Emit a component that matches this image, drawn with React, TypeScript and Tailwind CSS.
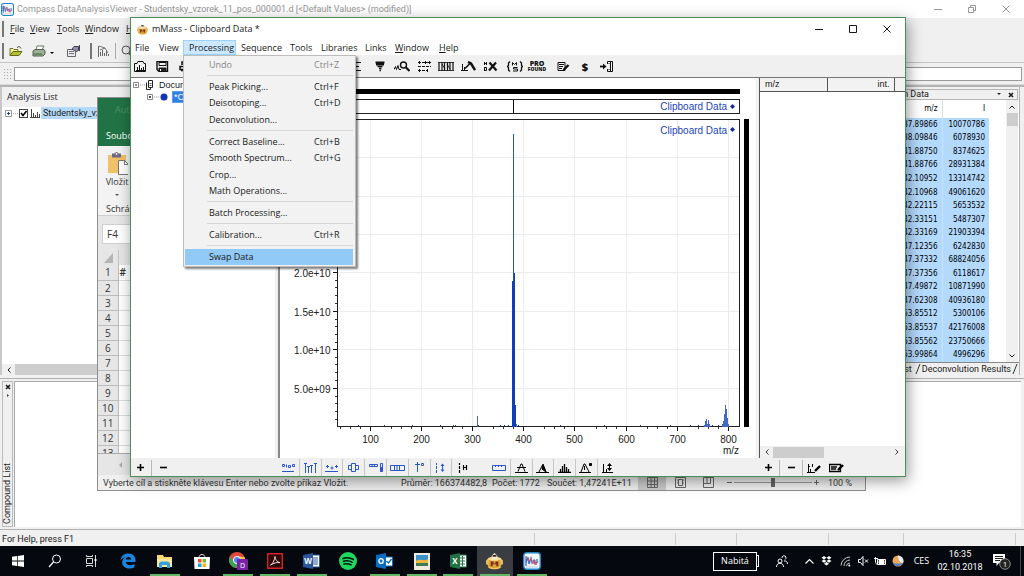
import type { ReactNode } from "react";

interface IconProps {
  w?: number;
  h?: number;
  children: ReactNode;
}

function Icon({ w = 14, h = 12, children }: IconProps) {
  return (
    <svg width={w} height={h} viewBox={`0 0 ${w} ${h}`} fill="none" stroke="currentColor" className="shrink-0" aria-hidden="true">
      {children}
    </svg>
  );
}

function Tool({ label, children, className = "" }: { label: string; children?: ReactNode; className?: string }) {
  return (
    <button type="button" aria-label={label} className={`flex h-full w-[22px] shrink-0 items-center justify-center ${className}`}>
      {children}
    </button>
  );
}

function Sep() {
  return <span className="h-4 w-px shrink-0 bg-[#b8b8b8]" />;
}

/* ---------- logos ---------- */

function CompassLogo({ size }: { size: number }) {
  return (
    <svg width={size} height={size} viewBox="0 0 18 18" fill="none" aria-hidden="true">
      <rect x=".7" y=".7" width="16.6" height="16.6" rx="3" fill="#f3f6fb" stroke="#1f86c9" strokeWidth="1.4" />
      <path d="M3 14V4v7l2-6 1 7 2-6 1 5 2-3 1 4 2-2v-3" stroke="#3a62b8" strokeWidth="1.2" />
      <path d="M4 5l2 4 2-3 2 6 2-4 1 5 2-4" stroke="#d8607c" strokeWidth="1" />
      <path d="M3 15h12" stroke="#b9cbe6" />
    </svg>
  );
}

function MassLogo({ size }: { size: number }) {
  return (
    <svg width={size} height={size} viewBox="0 0 18 18" fill="none" className="shrink-0" aria-hidden="true">
      <path d="M2 6c2-3 12-3 14 0v9c-2 3-12 3-14 0z" fill="#dba23a" />
      <path d="M0 8l3-3v8l-3-1zM18 8l-3-3v8l3-1z" fill="#e8bd62" />
      <path d="M2 6c2-2 12-2 14 0-1 3-13 3-14 0z" fill="#f8dc92" />
      <path d="M6 7V3l3-3 3 3v4z" fill="#efe9dc" />
      <path d="M7 2h4v2H7z" fill="#4a2c14" />
      <path d="M5 9h3v2h2V9h3v5h-2v-2H7v2H5z" fill="#7a2f14" />
      <path d="M3 15c2 2 10 2 12 0" stroke="#f7d36c" />
    </svg>
  );
}

/* ---------- viewer behind ---------- */

const viewerMenus = [
  { name: "File", cls: "w-5" },
  { name: "View", cls: "w-[27px]" },
  { name: "Tools", cls: "w-7" },
  { name: "Window", cls: "w-[41px]" },
  { name: "Help", cls: "w-7" },
];

function ViewerHeader() {
  return (
    <header>
      <div className="flex h-[18px] items-center bg-white pl-px text-[#979797]">
        <CompassLogo size={13} />
        <h1 className="ml-[3px] whitespace-nowrap font-['Roboto',sans-serif] font-normal">
          Compass DataAnalysisViewer - Studentsky_vzorek_11_pos_000001.d [&lt;Default Values&gt; (modified)]
        </h1>
        <div className="ml-auto flex items-center gap-[26px] pr-[14px]">
          <button type="button" aria-label="Minimize"><Icon w={8} h={8}><path d="M0 4.5h8" /></Icon></button>
          <button type="button" aria-label="Restore"><Icon w={8} h={8}><path d="M.5 2.5h5v5h-5zM2.5 2V.5h5v5H6" /></Icon></button>
          <button type="button" aria-label="Close"><Icon w={8} h={8}><path d="M.5.5l7 7M7.500.5l-7 7" /></Icon></button>
        </div>
      </div>
      <nav className="flex h-[22px] items-center pl-[2px]">
        <span className="mr-[6px] h-4 w-[2px] bg-[#777]" />
        {viewerMenus.map((m) => (
          <button key={m.name} type="button" className={`shrink-0 text-left ${m.cls}`}>
            <span className="underline">{m.name[0]}</span>
            {m.name.slice(1)}
          </button>
        ))}
      </nav>
      <div className="flex h-[22px] items-center pl-[2px]">
        <span className="mr-[5px] h-4 w-[2px] bg-[#777]" />
        <button type="button" aria-label="Open">
          <Icon w={14} h={12}>
            <path d="M1 10.500V3.500h3l1 1h4v2" stroke="#6f7a1c" fill="#f5ef9e" />
            <path d="M1 10.500l3-4h9l-3 4z" stroke="#5f6a14" fill="#b5bf35" />
            <path d="M8 2.500c2-1.500 3-1 4 1" stroke="#444" />
          </Icon>
        </button>
        <button type="button" aria-label="Print" className="ml-[9px] flex items-center">
          <Icon w={14} h={13}>
            <path d="M4 5l1-4h7l-2 4z" fill="#fff" stroke="#6c7a6a" />
            <path d="M1 6l2-1.500h9l1 1.500v3l-2 2H1z" fill="#9fae96" stroke="#4f5f50" />
            <path d="M2 9h8" stroke="#2d6b2d" />
          </Icon>
          <span className="ml-1 mt-1 border-x-2 border-t-2 border-x-transparent border-t-black" />
        </button>
        <button type="button" aria-label="Properties" className="ml-[13px]">
          <Icon w={13} h={13}>
            <path d="M.5 4.500h8v7h-8z" fill="#e8e8ee" stroke="#666" />
            <path d="M2 6.500h5M2 8.500h5" stroke="#777" />
            <path d="M5 4l2-2.500h4.500v4l-2 1-2-1z" fill="#8d8db8" stroke="#444" />
            <path d="M12.500 0v6" stroke="#445" />
          </Icon>
        </button>
        <span className="ml-[10px] mr-[5px] h-4 w-[2px] bg-[#777]" />
        <button type="button" aria-label="Spectrum">
          <Icon w={13} h={13}>
            <path d="M1.500 1v11M3.500 11V7M5.500 11V5M7.500 11V8M9.500 11V6M11.500 11V9" stroke="#666" />
            <path d="M2 1l6 2-5 2M8 3l3 5" stroke="#777" />
          </Icon>
        </button>
        <span className="mx-[5px] h-4 w-px bg-[#aaa]" />
        <button type="button" aria-label="Zoom">
          <Icon w={13} h={13}>
            <circle cx="5" cy="5" r="4" stroke="#555" />
            <path d="M8 8l4 4" stroke="#555" strokeWidth="2" />
          </Icon>
        </button>
      </div>
      <div className="flex h-[23px] items-center border-y border-t-[#c4c4c4] border-b-[#d9d9d9] pl-[3px] pr-[2px]">
        <span className="mr-[2px] h-3 w-[9px] bg-[radial-gradient(#aaa_1px,transparent_1px)] bg-[size:3px_3px]" />
        <input aria-label="Message" className="h-[14px] min-w-0 flex-1 border border-[#9a9a9a] bg-white px-1 outline-none" />
      </div>
    </header>
  );
}

const peaks: [string, string][] = [
  ["137.89866", "10070786"],
  ["138.09846", "6078930"],
  ["141.88750", "8374625"],
  ["141.88766", "28931384"],
  ["142.10952", "13314742"],
  ["142.10968", "49061620"],
  ["142.22115", "5653532"],
  ["142.33151", "5487307"],
  ["142.33169", "21903394"],
  ["147.12356", "6242830"],
  ["147.37332", "68824056"],
  ["147.37356", "6118617"],
  ["147.49872", "10871990"],
  ["147.62308", "40936180"],
  ["153.85512", "5300106"],
  ["153.85537", "42176008"],
  ["153.85562", "23750666"],
  ["153.99864", "4996296"],
];

function ViewerMain() {
  return (
    <main className="flex min-h-0 flex-1 border-t-2 border-t-[#b4b4b4] pb-[3px]">
      <section className="flex w-64 flex-col border-l-2 border-l-[#c8c8c8]">
        <h2 className="flex h-5 items-center pl-[5px] font-normal">Analysis List</h2>
        <div className="flex-1 bg-white pl-[3px]">
          <div className="flex h-3 items-center">
            <Icon w={14} h={9}>
              <path d="M.5 1.500h6v6h-6z" stroke="#999" />
              <path d="M2 4.500h3M3.500 3v3" stroke="#223a80" />
              <path d="M8 4.500h5" stroke="#aaa" strokeDasharray="1 1" />
            </Icon>
            <input id="analysis" type="checkbox" defaultChecked className="h-[9px] w-[9px] appearance-none border border-[#444] bg-white" />
            <svg width="9" height="9" viewBox="0 0 9 9" fill="none" className="pointer-events-none -ml-[9px]" aria-hidden="true">
              <path d="M2 4l2 2.500L7.500 2" stroke="#000" strokeWidth="1.600" />
            </svg>
            <Icon w={13} h={10}>
              <path d="M3.500 1v8M5.500 5v4M7.500 7v2M2 9.500h10M9.500 4v5M11.500 6v3" stroke="#444" />
            </Icon>
            <label htmlFor="analysis" className="h-3 whitespace-nowrap bg-[#b5d9fb] px-[2px] font-['Roboto',sans-serif] leading-3">Studentsky_vzorek</label>
          </div>
        </div>
        <div className="flex h-[11px] items-center">
          <button type="button" aria-label="Scroll left" className="flex h-full w-[13px] items-center justify-center">
            <Icon w={4} h={6}><path d="M3.500.5L1 3l2.500 2.500" /></Icon>
          </button>
          <span className="h-full flex-1 bg-[#cdcdcd]" />
        </div>
      </section>
      <div className="min-w-0 flex-1 bg-white" />
      <section className="mr-1 flex w-[140px] flex-col border-r border-r-[#b4b4b4]">
        <div className="mr-px mt-[2px] flex h-[11px] items-center border-y border-r border-[#b4b4b4]">
          <h2 className="flex w-[49px] justify-end whitespace-nowrap font-['Roboto',sans-serif] font-normal leading-none">Spectrum Data</h2>
          <button type="button" aria-label="Panel menu" className="ml-auto">
            <Icon w={4} h={3}><path d="M0 0h4L2 2z" fill="#222" stroke="none" /></Icon>
          </button>
          <button type="button" aria-label="Close panel" className="ml-[7px] mr-[3px]">
            <Icon w={6} h={6}><path d="M1 1l4 4M5 1L1 5" strokeWidth="1.600" /></Icon>
          </button>
        </div>
        <div className="flex min-h-0 flex-1 bg-white">
          <table className="h-full w-[109px] text-right font-['DejaVu_Sans_Condensed','DejaVu_Sans',sans-serif] text-[8px] leading-none text-black">
            <thead>
              <tr className="h-[18px]">
                <th className="w-[62px] border-r border-r-[#ddd] pr-1 font-normal">m/z</th>
                <th className="pr-1 font-normal">I</th>
              </tr>
            </thead>
            <tbody className="bg-[#b3d9fd]">
              {peaks.map(([mz, intensity]) => (
                <tr key={mz}>
                  <td className="border-r border-r-[#c6e2fd] pr-1">{mz}</td>
                  <td className="pr-1">{intensity}</td>
                </tr>
              ))}
            </tbody>
          </table>
          <div className="ml-auto mr-px flex w-3 flex-col items-center bg-[#f0f0f0]">
            <button type="button" aria-label="Scroll up" className="flex h-[13px] items-center">
              <Icon w={6} h={4}><path d="M.5 3.500L3 1l2.500 2.500" /></Icon>
            </button>
            <span className="h-[13px] w-[11px] bg-[#cdcdcd]" />
            <button type="button" aria-label="Scroll down" className="mt-auto flex h-3 items-center">
              <Icon w={6} h={4}><path d="M.5.5L3 3 5.500.5" /></Icon>
            </button>
          </div>
        </div>
        <div className="flex h-[13px] items-center border-t border-t-[#888] font-['Roboto',sans-serif]">
          <span className="w-[33px] text-right">List</span>
          <Icon w={10} h={12}><path d="M4 11L8 1" stroke="#333" /></Icon>
          <button type="button" className="whitespace-nowrap">Deconvolution Results</button>
          <Icon w={8} h={12}><path d="M2 11L6 1" stroke="#333" /></Icon>
        </div>
      </section>
    </main>
  );
}

function ViewerFooter() {
  return (
    <footer>
      <section className="flex h-[152px] border-y border-y-[#b0b0b0] py-[2px] pl-[2px] pr-[3px]">
        <div className="mr-px flex w-[11px] flex-col items-center border border-[#bbb] pt-[2px]">
          <button type="button" aria-label="Close list"><Icon w={6} h={6}><path d="M1 1l4 4M5 1L1 5" strokeWidth="1.600" /></Icon></button>
          <Icon w={4} h={8}><path d="M1 4l2 1.500L1 7z" fill="#444" stroke="none" /></Icon>
          <h2 className="mb-[2px] mt-auto rotate-180 font-['Roboto',sans-serif] font-normal leading-[9px] [writing-mode:vertical-rl]">Compound List</h2>
        </div>
        <div className="flex-1 border-l border-t border-[#aaa] bg-white" />
      </section>
      <div className="flex h-4 items-center pl-[2px] pt-[2px]">
        <span className="font-['Roboto',sans-serif]">For Help, press F1</span>
        <div className="ml-auto flex h-3">
          <span className="w-[141px] border-l border-[#ccc]" />
          <span className="w-[61px] border-l border-[#ccc]" />
          <span className="w-[92px] border-l border-[#ccc]" />
          <span className="w-[75px] border-l border-[#ccc]" />
          <span className="w-[112px] border-l border-[#ccc]" />
          <span className="w-[9px] border-l border-[#ccc]" />
        </div>
      </div>
    </footer>
  );
}

/* ---------- spreadsheet ---------- */

const rows = [1, 2, 3, 4, 5, 6, 7, 8, 9, 10, 11, 12, 13];

function Sheet() {
  return (
    <section className="absolute bottom-[85px] left-[97px] right-[158px] top-[97px] flex flex-col border border-[#8e8e8e] bg-[#e6e6e6] text-[#333]">
      <header className="flex h-12 shrink-0 flex-col justify-between bg-[#217346] pb-[4px] pl-2 pt-[6px]">
        <span className="pl-[9px] text-[#4f9068]">Aut</span>
        <button type="button" className="self-start text-white">Soubor</button>
      </header>
      <div className="flex h-[70px] shrink-0 flex-col border-b border-b-[#cfcfcf] bg-[#f3f3f3] pl-2 pt-[6px] leading-3">
        <button type="button" className="flex w-[22px] flex-col items-center">
          <Icon w={22} h={24}>
            <path d="M2 3h18v18H2z" fill="#efc26a" stroke="none" />
            <path d="M6 1.500h9v4H6z" fill="#6a6a86" stroke="none" />
            <circle cx="10.500" cy="2" r="1.500" fill="#fff" stroke="#5b5b78" />
            <path d="M12.500 8.500h6l4 4v10h-10z" fill="#fff" stroke="#777" />
            <path d="M18.500 8.500v4h4" stroke="#777" />
          </Icon>
          <span>Vložit</span>
          <span className="mt-[6px] border-x-2 border-t-2 border-x-transparent border-t-[#555]" />
        </button>
        <span className="mt-auto">Schránka</span>
      </div>
      <div className="flex h-[34px] shrink-0 items-center pl-1 pt-[2px]">
        <input aria-label="Name box" defaultValue="F4" className="h-5 w-20 border border-[#d0d0d0] bg-white px-1 text-[10px] outline-none" />
      </div>
      <div className="min-h-0 flex-1 overflow-hidden border-b border-b-[#aaa]">
        <table className="border-collapse text-center text-[10px] leading-[14px]">
          <thead>
            <tr className="h-[15px]">
              <th className="w-5 border-r border-r-[#c6c6c6]">
                <Icon w={16} h={10}><path d="M15 0v10H6z" fill="#b5b5b5" stroke="none" /></Icon>
              </th>
              <th className="w-16" />
            </tr>
          </thead>
          <tbody>
            {rows.map((n) => (
              <tr key={n} className="h-[15px]">
                <th className="border-b border-r border-[#bdbdbd] font-normal">{n}</th>
                <td className="border-b border-b-[#ddd] bg-white pl-px text-left font-semibold">{n === 1 ? "#" : ""}</td>
              </tr>
            ))}
          </tbody>
        </table>
      </div>
      <div className="flex h-[21px] shrink-0 items-center pl-5 text-[#aaa]">
        <Icon w={4} h={6}><path d="M4 0v6L1 3z" fill="currentColor" stroke="none" /></Icon>
      </div>
      <footer className="flex h-[15px] shrink-0 items-center whitespace-nowrap bg-[#f0f0f0] pl-[5px] pr-[13px] font-['Roboto',sans-serif]">
        <span className="w-[298px]">Vyberte cíl a stiskněte klávesu Enter nebo zvolte příkaz Vložit.</span>
        <span className="w-[91px]">Průměr: 166374482,8</span>
        <span className="w-[55px]">Počet: 1772</span>
        <span>Součet: 1,47241E+11</span>
        <div className="ml-auto flex items-center text-[#666]">
          <button type="button" aria-label="Normal view" className="flex h-[15px] w-7 items-center justify-center bg-[#cbcbcb]">
            <Icon w={11} h={11}><path d="M.5.5h10v10H.5zM.5 4h10M.5 7.500h10M4 .5v10M7.500.5v10" /></Icon>
          </button>
          <button type="button" aria-label="Page layout" className="flex w-7 justify-center">
            <Icon w={11} h={11}><path d="M.5.5h10v10H.5zM3.500 2.500h4v6h-4zM2 3h1M2 6h1M8 3h1M8 6h1" /></Icon>
          </button>
          <button type="button" aria-label="Page breaks" className="flex w-7 justify-center">
            <Icon w={11} h={11}><path d="M.5.5h10v10H.5zM.5 6.500h7V.5M4 .5v6" /></Icon>
          </button>
          <button type="button" aria-label="Zoom out" className="ml-[5px]"><Icon w={5} h={5}><path d="M0 2.500h5" /></Icon></button>
          <input
            type="range"
            aria-label="Zoom"
            className="mx-[2px] h-[9px] w-[78px] appearance-none bg-[linear-gradient(#999,#999)] bg-[length:100%_1px] bg-center bg-no-repeat [&::-webkit-slider-thumb]:h-[9px] [&::-webkit-slider-thumb]:w-1 [&::-webkit-slider-thumb]:appearance-none [&::-webkit-slider-thumb]:bg-[#666]"
          />
          <button type="button" aria-label="Zoom in"><Icon w={5} h={5}><path d="M0 2.500h5M2.500 0v5" /></Icon></button>
          <span className="ml-[9px] text-[#444]">100 %</span>
        </div>
      </footer>
    </section>
  );
}

/* ---------- mMass ---------- */

const menuItems: ([string, string] | null)[] = [
  ["Undo", "Ctrl+Z"],
  null,
  ["Peak Picking...", "Ctrl+F"],
  ["Deisotoping...", "Ctrl+D"],
  ["Deconvolution...", ""],
  null,
  ["Correct Baseline...", "Ctrl+B"],
  ["Smooth Spectrum...", "Ctrl+G"],
  ["Crop...", ""],
  ["Math Operations...", ""],
  null,
  ["Batch Processing...", ""],
  null,
  ["Calibration...", "Ctrl+R"],
  null,
  ["Swap Data", ""],
];

function ProcessingMenu() {
  return (
    <div role="menu" className="absolute left-0 top-full z-10 flex h-[212px] w-[173px] flex-col border border-[#bdbdbd] bg-[#f2f2f2] pb-px pl-px pr-[2px] shadow-[2px_2px_2px_rgba(0,0,0,0.5)]">
      {menuItems.map((item, i) =>
        item ? (
          <button
            key={i}
            type="button"
            role="menuitem"
            disabled={item[0] === "Undo"}
            className={`flex min-h-0 flex-[3] items-center pl-6 leading-none disabled:text-[#858585] ${item[0] === "Swap Data" ? "bg-[#91c9f7]" : ""}`}
          >
            <span className="w-[105px] whitespace-nowrap text-left">{item[0]}</span>
            <span className="whitespace-nowrap">{item[1]}</span>
          </button>
        ) : (
          <div key={i} className="ml-[22px] flex flex-1 items-center">
            <span className="h-px w-full bg-[#d7d7d7]" />
          </div>
        )
      )}
    </div>
  );
}

const massMenus = [
  { name: "File", cls: "w-6" },
  { name: "View", cls: "w-[25px]" },
  { name: "Processing", cls: "w-[53px]" },
  { name: "Sequence", cls: "w-[49px]" },
  { name: "Tools", cls: "w-[31px]" },
  { name: "Libraries", cls: "w-11" },
  { name: "Links", cls: "w-[30px]" },
  { name: "Window", cls: "w-11" },
  { name: "Help", cls: "w-8" },
];

function MassHeader() {
  return (
    <header className="shrink-0 bg-white">
      <div className="flex h-[22px] items-center pl-[6px]">
        <MassLogo size={11} />
        <h2 className="ml-[4px] font-normal">mMass - Clipboard Data *</h2>
        <div className="ml-auto flex items-center gap-[26px] pr-[14px]">
          <button type="button" aria-label="Minimize"><Icon w={8} h={8}><path d="M0 4.500h8" /></Icon></button>
          <button type="button" aria-label="Maximize"><Icon w={8} h={8}><path d="M.5.5h7v7h-7z" /></Icon></button>
          <button type="button" aria-label="Close"><Icon w={8} h={8}><path d="M.5.5l7 7M7.500.5l-7 7" /></Icon></button>
        </div>
      </div>
      <nav className="flex h-[15px] pl-[4px]">
        {massMenus.map((m) =>
          m.name === "Processing" ? (
            <div key={m.name} className="relative -ml-px mr-[5px]">
              <button type="button" aria-expanded="true" className="h-full w-[53px] border border-[#99d1ff] bg-[#cce8ff] pl-[5px] text-left leading-none">
                {m.name}
              </button>
              <ProcessingMenu />
            </div>
          ) : (
            <button key={m.name} type="button" className={`text-left leading-none ${m.cls}`}>
              {m.name === "Window" || m.name === "Help" ? (
                <>
                  <span className="underline">{m.name[0]}</span>
                  {m.name.slice(1)}
                </>
              ) : (
                m.name
              )}
            </button>
          )
        )}
      </nav>
      <div className="flex h-[22px] items-center bg-[#f0f0f0] text-[#111]">
        <div className="-ml-[2px] mr-[149px] flex h-full">
          <Tool label="Open document">
            <Icon w={13} h={11}><path d="M1 2.500h2l1-2h5l1 2h1.500v8H.5v-8z" /><path d="M3.500 9V6M5.500 9V4M7.500 9V7M9.500 9V6M2 9.500h9" /></Icon>
          </Tool>
          <Tool label="Save document">
            <Icon w={13} h={11}><path d="M1 .5h10.500v10H3l-2-2z" strokeWidth="1.400" /><path d="M3 1.500h7v3H3z" /><path d="M3 7h7v3.500H3z" fill="#222" /><path d="M4.500 8v2" stroke="#fff" /></Icon>
          </Tool>
          <Tool label="Print">
            <Icon w={13} h={11}><path d="M4 4V1h6v3M2 5.500h10v3H2zM3 9.500h8" strokeWidth="1.500" /></Icon>
          </Tool>
        </div>
        <Tool label="Compare">
          <Icon w={13} h={11}><path d="M0 1.500h12M0 5.500h10M0 9.500h12" /></Icon>
        </Tool>
        <span className="ml-[3px]"><Sep /></span>
        <Tool label="Filter">
          <Icon w={12} h={11}><path d="M1.500 1.500h9M2 3.500h8" strokeWidth="2" /><path d="M3.500 5.500h5M5 7.500h2.500M5.500 9.500H7" strokeWidth="1.700" /></Icon>
        </Tool>
        <Tool label="Peak zoom">
          <Icon w={16} h={11}><path d="M0 8.500l1.500-3 1 3 1.500-4 1 4h2" /><circle cx="9.500" cy="4" r="3" strokeWidth="1.400" /><path d="M11.500 6l4 4" strokeWidth="2.200" /></Icon>
        </Tool>
        <Tool label="Mass lists">
          <Icon w={15} h={11}><path d="M1 1.500h13M1 5.500h13M1 9.500h10" strokeDasharray="3 1" /><path d="M2.500 0v3M8.500 0v3M12.500 0v3M2.500 8v3M10.500 8v3" /></Icon>
        </Tool>
        <Tool label="Sequence">
          <Icon w={16} h={11}><path d="M1 1v9M4 1v9M6.500 1v9M9.500 1v9M12 1v9M15 1v9" strokeWidth="1.200" /><path d="M0 1.500h16M0 9.500h16M4 3l3 5M9 3l3 5" strokeWidth=".8" /></Icon>
        </Tool>
        <Tool label="Baseline">
          <Icon w={15} h={11}><path d="M0 9.500h7M1.500 3v6M3.500 6v3" /><path d="M4 7.500L9 2.500" strokeWidth="1.600" /><path d="M7 1l3 1.500L14 9" strokeWidth="2.400" /></Icon>
        </Tool>
        <Tool label="Exchange">
          <Icon w={15} h={11}><path d="M1.500 1v3M3.500 1v3M1 2.500h3M1.500 6v4M1.500 6.500h2v3h-2" /><path d="M6.500 1.500l7 8M13 1.500l-7 8" strokeWidth="2.200" /></Icon>
        </Tool>
        <span className="ml-[1px] mr-[2px]"><Sep /></span>
        <Tool label="Mascot">
          <Icon w={16} h={11}><path d="M3 .5L1.500 2v2.500L.5 5.500l1 1V9L3 10.500M13 .5L14.500 2v2.500l1 1-1 1V9L13 10.500" strokeWidth="1.300" /><path d="M5.500 4.500v-3l2 2 2-2v3" /><path d="M10.500 6.500H6.500v1.500h4v2H6" /></Icon>
        </Tool>
        <Tool label="ProFound">
          <span className="flex flex-col items-center text-[7px] font-extrabold leading-[6px]">
            <span>PRO</span>
            <span className="text-[5px] leading-[5px]">FOUND</span>
          </span>
        </Tool>
        <span className="mx-[2px]"><Sep /></span>
        <Tool label="Report">
          <Icon w={13} h={11}><path d="M1 1.500h7v8H1zM2 3.500h5M2 5.500h4M2 7.500h3" /><path d="M6.500 9l5-5" strokeWidth="2.400" /></Icon>
        </Tool>
        <Tool label="Donate">
          <span className="text-[11px] font-extrabold leading-none">$</span>
        </Tool>
        <Tool label="Quit">
          <Icon w={14} h={11}><path d="M0 5.500h4" strokeWidth="1.800" /><path d="M3 2.500L6.500 5.500 3 8.500z" fill="#111" stroke="none" /><path d="M7.500 3V.5h5v10h-5V8M10.500 1v9M8.500 2.500h1M8.500 8.500h1" /></Icon>
        </Tool>
      </div>
    </header>
  );
}

function DocumentTree() {
  return (
    <div className="w-[144px] shrink-0 bg-white pt-px font-['Liberation_Sans',sans-serif]">
      <div className="flex h-3 items-center">
        <Icon w={28} h={12}>
          <path d="M2.500 3.500h5v5h-5z" stroke="#888" />
          <path d="M4 6h2" stroke="#111" />
          <path d="M9 6h6" stroke="#999" strokeDasharray="1 1" />
          <path d="M17.500 1.500h4v7h-4zM15.500 3.500v7h4v-2" stroke="#222" />
          <path d="M18.500 4.500h2M18.500 6.500h2" stroke="#555" />
        </Icon>
        <span>Documents</span>
      </div>
      <div className="flex h-3 items-center">
        <Icon w={41} h={12}>
          <path d="M16.500 3.500h5v5h-5z" stroke="#888" />
          <path d="M18 6h2M19 5v2" stroke="#111" />
          <path d="M23 6h5" stroke="#999" strokeDasharray="1 1" />
          <circle cx="33" cy="6" r="3.500" fill="#1432b4" stroke="none" />
        </Icon>
        <span className="flex h-3 w-24 items-center border border-[#5f9fe8] bg-[#2f7fe6] pl-px leading-[10px] text-white">*Clipboard Data</span>
      </div>
    </div>
  );
}

const xTicks = [100, 200, 300, 400, 500, 600, 700, 800];
const yTicks = ["5.0e+09", "1.0e+10", "1.5e+10", "2.0e+10"];
const GRID_ROWS = 7;
const X0 = 370;
const PER_100 = 51.1;
const BASE = 427;
const PER_Y = 38.4;

const gridY = (i: number) => Math.round(BASE - (i + 1) * PER_Y) - 0.5;

// x position, top of the peak
const clusterPeaks = [
  [477, 416], [516, 424], [704, 425], [705, 421], [706, 419], [707, 424], [708, 420], [709, 424],
  [722, 424], [723, 421], [724, 414], [725, 405], [726, 409], [727, 418], [728, 424],
];
const noise = [358, 384, 412, 440, 453, 455, 478, 500, 504, 508, 518, 560, 604, 640, 670, 690, 698, 712, 718];

function Spectrum() {
  return (
    <svg viewBox="280 78 476 380" className="h-full w-full" fontFamily="'Liberation Sans', sans-serif" fontSize="10" shapeRendering="crispEdges" role="img" aria-label="Mass spectrum">
      <rect x="338" y="89" width="402" height="5" fill="#000" />
      <rect x="337.500" y="99.500" width="402" height="14" fill="#fff" stroke="#222" />
      <path d="M513.500 100v14" stroke="#111" strokeWidth="1" />
      <rect x="744" y="119" width="5" height="308" fill="#000" />
      {xTicks.map((t, i) => (
        <path key={t} d={`M${Math.round(X0 + i * PER_100) + 0.5} 120v307`} stroke="#ececec" />
      ))}
      {Array.from({ length: GRID_ROWS }, (_, i) => (
        <path key={i} d={`M338 ${gridY(i)}h401`} stroke="#ececec" />
      ))}
      <rect x="337.500" y="119.500" width="402" height="307" fill="none" stroke="#222" />
      {xTicks.map((t, i) => {
        const x = Math.round(X0 + i * PER_100) + 0.5;
        return (
          <g key={t}>
            <path d={`M${x} 427v4`} stroke="#111" />
            <path d={`M${x - 30.5} 427v2M${x - 20.5} 427v2M${x - 10.5} 427v2`} stroke="#333" />
            <text x={x} y="443" textAnchor="middle" fill="#222">{t}</text>
          </g>
        );
      })}
      {yTicks.map((t, i) => {
        const y = gridY(i);
        return (
          <g key={t}>
            <path d={`M333 ${y}h4`} stroke="#111" />
            <path d={`M335 ${y + 8}h2M335 ${y + 15}h2M335 ${y + 23}h2M335 ${y + 31}h2`} stroke="#333" />
            <text x="330.500" y={y + 4} textAnchor="end" fill="#222">{t}</text>
          </g>
        );
      })}
      <text x="739" y="454" textAnchor="end" fill="#222">m/z</text>

      {noise.map((x) => (
        <path key={x} d={`M${x} 426v-1`} stroke="#1b3aa0" />
      ))}
      {clusterPeaks.map(([x, y]) => (
        <path key={x} d={`M${x + 0.5} ${y}V427`} stroke="#3f68c8" />
      ))}
      <path d="M513.500 134V427" stroke="#2558c4" />
      <path d="M513 281V427M514.500 405V427" stroke="#123fb8" strokeWidth="2" />
      <path d="M514 273V427" stroke="#123fb8" />

      <g fill="#2344b8">
        <text x="727" y="110" textAnchor="end">Clipboard Data</text>
        <text x="727" y="134" textAnchor="end">Clipboard Data</text>
        <path d="M732.500 104l2.500 2.500-2.500 2.500-2.500-2.500zM732.500 127l2.500 2.500-2.500 2.500-2.500-2.500z" fill="#1a2c9c" shapeRendering="auto" />
      </g>
    </svg>
  );
}

function PeakList() {
  return (
    <div className="ml-[3px] flex w-[146px] shrink-0 flex-col border-l border-l-[#555] bg-white font-['Liberation_Sans',sans-serif]">
      <table className="w-full table-fixed bg-[#f2f2f2]">
        <thead>
          <tr className="h-[13px] border-b border-b-[#555] leading-none">
            <th className="w-[67px] border-r border-r-[#555] pl-[5px] text-left font-normal">m/z</th>
            <th className="w-[67px] border-r border-r-[#555] pr-1 text-right font-normal">int.</th>
            <th />
          </tr>
        </thead>
      </table>
      <div className="mt-auto flex h-3 items-center bg-[#f0f0f0] text-[#333]">
        <button type="button" aria-label="Scroll left" className="flex w-[13px] justify-center">
          <Icon w={4} h={6}><path d="M3.500.5L1 3l2.500 2.500" /></Icon>
        </button>
        <span className="h-[11px] w-[51px] bg-[#cdcdcd]" />
        <button type="button" aria-label="Scroll right" className="ml-auto mr-[2px] flex w-[13px] justify-center">
          <Icon w={4} h={6}><path d="M.5.5L3 3 .5 5.500" /></Icon>
        </button>
      </div>
    </div>
  );
}

function MassFooter() {
  return (
    <footer className="flex h-[18px] shrink-0 items-center bg-[#f0f0f0] pt-px text-black">
      <div className="-ml-[2px] mr-[104px] flex h-full items-center">
        <Tool label="Add"><Icon w={7} h={7}><path d="M0 3.500h7M3.500 0v7" strokeWidth="1.600" /></Icon></Tool>
        <Sep />
        <Tool label="Remove"><Icon w={7} h={7}><path d="M0 3.500h7" strokeWidth="1.600" /></Icon></Tool>
      </div>
      <div className="grid h-full w-[196px] grid-cols-9 justify-items-center divide-x divide-[#c6c6c6] text-[#2a57c8]">
        <Tool label="Labels"><Icon w={13} h={10}><path d="M0 8.500h12" /><path d="M.5 1.500h2v2h-2zM4.500 1.500v3M6.500 2.500h2v2h-2zM10.500 1.500h2v2h-2z" /></Icon></Tool>
        <Tool label="Ticks"><Icon w={13} h={10}><path d="M0 .5h3M1.500 1v9M4.500 4v6M7.500 3v7M11.500 1v9M3 3.500h3M10 .5h3M6 2.500h3" /></Icon></Tool>
        <Tool label="Points"><Icon w={14} h={10}><path d="M0 8.500h13" /><path d="M1 3.500h3M2.500 2v3M5.500 5h3M7 3.500v3M10 3.500h3M11.500 2v3" /></Icon></Tool>
        <Tool label="Gel"><Icon w={11} h={11}><path d="M3.500 1.500h4v8h-4zM.5 3.500h3v4h-3zM7.500 3.500h3v4h-3z" /></Icon></Tool>
        <Tool label="Gel legend"><Icon w={14} h={10}><path d="M.5 1.500h8v2h-8z" /><path d="M3 1v3M5.500 1v3" /><path d="M11.500.5h2v8h-2z" /><path d="M12.500 4v5" strokeWidth="2" /></Icon></Tool>
        <Tool label="Tracker"><Icon w={15} h={8}><path d="M.5 1.500h14v5H.5zM4.500 1v6M9.500 1v6M7 1v6" /></Icon></Tool>
        <Tool label="Position"><Icon w={9} h={11}><path d="M0 2.500h5M2.500 0v10M6.500 1.500h2v2h-2z" /></Icon></Tool>
        <Tool label="Autoscale"><Icon w={11} h={10}><path d="M1.500 0v2M1.500 3v3M1.500 7v3M7.500 1v7" /><path d="M5.500 3L7.500.5l2 2.500zM5.500 6.500l2 2.500 2-2.500z" fill="#2a57c8" stroke="none" /></Icon></Tool>
        <Tool label="Normalize" className="text-black"><Icon w={11} h={10}><path d="M1.500 0v2M1.500 3v3M1.500 7v3M5.500 2v5M8.500 2v5M6 4.500h3" strokeWidth="1.200" /></Icon></Tool>
      </div>
      <div className="ml-[15px] grid h-full w-[130px] grid-cols-6 justify-items-center divide-x divide-[#c6c6c6]">
        <Tool label="Ruler" className="text-[#2a57c8]"><Icon w={14} h={8}><path d="M.5 1.500h13v5H.5zM3.500 1v2M6.500 1v2M9.500 1v2" /></Icon></Tool>
        <Tool label="Pick peak"><Icon w={13} h={10}><path d="M0 9.500h13M3 8.500l3-7.500h1l3 7.500M2 4.500h9" /></Icon></Tool>
        <Tool label="Pick point"><Icon w={13} h={10}><path d="M0 9.500h13M3 9l4-8 3 8" /><path d="M7 2l3 7-4-3z" fill="#000" /></Icon></Tool>
        <Tool label="Isotopes"><Icon w={13} h={10}><path d="M0 9.500h13M2.500 6v3M4.500 3v6M6.500 1v8M8.500 4v5M10.500 6v3" strokeWidth="1.300" /></Icon></Tool>
        <Tool label="Charge"><Icon w={14} h={10}><path d="M0 9.500h12M2 9l3-8h1l4 8M5.500 3v4" /><path d="M10.500.5h2v2h-2z" fill="#000" /></Icon></Tool>
        <Tool label="Offset"><Icon w={12} h={10}><path d="M1.500 1v8M0 9.500h11M4.500 6v3M7.500 2v4" /><path d="M5 3L7.500 0 10 3zM5 5l2.500 3L10 5z" fill="#000" stroke="none" /></Icon></Tool>
      </div>
      <div className="ml-auto flex h-full items-center pr-[58px]">
        <Tool label="Add peak"><Icon w={7} h={7}><path d="M0 3.500h7M3.500 0v7" strokeWidth="1.600" /></Icon></Tool>
        <Sep />
        <Tool label="Remove peak"><Icon w={7} h={7}><path d="M0 3.500h7" strokeWidth="1.600" /></Icon></Tool>
        <Sep />
        <Tool label="Annotate"><Icon w={14} h={10}><path d="M1.500 1v8M0 9.500h8M3.500 6v3M5.500 1v3M1 3.500h2" /><path d="M8 8l5-5" strokeWidth="2.400" /></Icon></Tool>
        <Tool label="Edit list"><Icon w={15} h={10}><path d="M.5 1.500h11v7H.5zM2 4h6M2 6h5" strokeWidth="1.300" /><path d="M9 7l5-5" strokeWidth="2.400" /></Icon></Tool>
      </div>
    </footer>
  );
}

function MassWindow() {
  return (
    <section className="absolute bottom-[99px] left-[130px] right-[118px] top-[17px] flex flex-col border border-[#4a8d55] bg-[#f0f0f0] shadow-[2px_4px_14px_rgba(0,0,0,0.4)]">
      <MassHeader />
      <div className="flex min-h-0 flex-1 border-t border-t-[#777]">
        <DocumentTree />
        <div className="ml-[3px] min-w-0 flex-1 border-l-2 border-l-[#888] bg-white">
          <Spectrum />
        </div>
        <PeakList />
      </div>
      <MassFooter />
    </section>
  );
}

/* ---------- taskbar ---------- */

interface TaskItem {
  name: string;
  open?: boolean;
  active?: boolean;
  icon: ReactNode;
}

const tasks: TaskItem[] = [
  { name: "Start", icon: <Icon w={12} h={12}><path d="M0 1.700L5 1v4.600H0zM5.700.9L12 0v5.600H5.700zM0 6.400h5V11l-5-.7zM5.700 6.400H12V12l-6.300-.9z" fill="#fff" stroke="none" /></Icon> },
  { name: "Search", icon: <Icon w={14} h={14}><circle cx="8.500" cy="5" r="4" stroke="#fff" /><path d="M5.500 8l-4.500 5" stroke="#fff" strokeWidth="1.200" /></Icon> },
  { name: "Task view", icon: <Icon w={13} h={12}><path d="M1.500 3.500h6v5h-6zM1.500 0v1.500h6V0M1.500 12v-1.500h6V12M10.500 0v12" stroke="#ddd" /><path d="M9.500 4h2v2h-2z" fill="#fff" stroke="none" /></Icon> },
  {
    name: "Edge",
    icon: (
      <Icon w={16} h={16}>
        <path d="M.5 7.500C1 3 4 .5 8.500.5c4.500 0 7 3 7 6.500v2H5.700c.2 2 2 3.200 4.500 3.200 1.700 0 3-.4 4.300-1.100v3.200c-1.400.8-3.100 1.200-5 1.200-4.500 0-7.300-2.500-7.300-6C2.200 7 3.500 5 5.800 3.900 3.500 4.200 1.700 5.500.5 7.500zM5.800 6.600h5.300c0-1.700-.9-2.700-2.500-2.700-1.500 0-2.600 1-2.800 2.700z" fill="#1b86e0" stroke="none" />
      </Icon>
    ),
  },
  {
    name: "Explorer",
    open: true,
    icon: (
      <Icon w={17} h={15}>
        <path d="M1 1h6l1 2h8v10H1z" fill="#f6d974" stroke="none" />
        <path d="M1 5h15v8H1z" fill="#fbe79c" stroke="none" />
        <path d="M3 14V9l2-1.500h7L14 9v5h-3v-3H6v3z" fill="#3aa0dc" stroke="none" />
      </Icon>
    ),
  },
  {
    name: "Store",
    icon: (
      <Icon w={18} h={16}>
        <path d="M6 4.500C6 .5 12 .5 12 4.500" stroke="#ddd" />
        <path d="M1 4h16l-.5 12h-15z" fill="#fff" stroke="none" />
        <path d="M5 6h3.500v3.500H5z" fill="#e8502a" stroke="none" />
        <path d="M9.500 6H13v3.500H9.500z" fill="#7db82c" stroke="none" />
        <path d="M5 10.500h3.500V14H5z" fill="#1c9fe0" stroke="none" />
        <path d="M9.500 10.500H13V14H9.500z" fill="#f4b400" stroke="none" />
      </Icon>
    ),
  },
  {
    name: "Chrome",
    open: true,
    icon: (
      <Icon w={19} h={18}>
        <circle cx="8" cy="8" r="8" fill="#e4493a" stroke="none" />
        <path d="M1 4.200A8 8 0 0 0 7 16l4-6-6 0z" fill="#3aa655" stroke="none" />
        <path d="M15.500 5A8 8 0 0 1 8 16l3.500-6L8 4.500z" fill="#f7cb30" stroke="none" />
        <circle cx="8" cy="8" r="3.600" fill="#4a8af4" stroke="#fff" />
        <rect x="8" y="7" width="11" height="11" rx="1" fill="#7b22a8" stroke="none" />
        <text x="13.500" y="15.500" textAnchor="middle" fontSize="7" fill="#fff" stroke="none">D</text>
      </Icon>
    ),
  },
  {
    name: "Acrobat",
    open: true,
    icon: (
      <Icon w={16} h={16}>
        <path d="M.7.7h14.600v14.600H.7z" fill="#2a0808" stroke="#d3222a" strokeWidth="1.400" />
        <path d="M3.500 12c1.500-.5 4-4 4.500-8.500 0 3 2 5.500 5 6.200-3-.6-6 .3-9.500 2.300z" stroke="#f3dcdc" />
      </Icon>
    ),
  },
  {
    name: "Word",
    open: true,
    icon: (
      <Icon w={17} h={16}>
        <path d="M8 2h8.500v12H8z" fill="#fff" stroke="#2b579a" />
        <path d="M10 5h5M10 7h5M10 9h5M10 11h5" stroke="#2b579a" />
        <path d="M0 2l10-2v16L0 14z" fill="#2b579a" stroke="none" />
        <text x="5" y="11" textAnchor="middle" fontSize="8" fontWeight="700" fill="#fff" stroke="none">W</text>
      </Icon>
    ),
  },
  {
    name: "Spotify",
    icon: (
      <Icon w={18} h={18}>
        <circle cx="9" cy="9" r="9" fill="#1ed760" stroke="none" />
        <path d="M4 6.500c3.500-1 7.500-.7 10.500 1M4.500 9.300c3-.8 6.300-.4 8.800 1M5 12c2.500-.6 5-.3 7 .9" stroke="#06130a" strokeWidth="1.500" strokeLinecap="round" />
      </Icon>
    ),
  },
  {
    name: "Outlook",
    open: true,
    icon: (
      <Icon w={17} h={16}>
        <path d="M9 4h7.500v9H9z" fill="#fff" stroke="#0a6cbf" />
        <path d="M10.500 8l2 2 3-4" stroke="#0a6cbf" strokeWidth="1.400" />
        <path d="M0 2l10-2v16L0 14z" fill="#0a6cbf" stroke="none" />
        <text x="5" y="11" textAnchor="middle" fontSize="8" fontWeight="700" fill="#fff" stroke="none">O</text>
      </Icon>
    ),
  },
  {
    name: "Photos",
    open: true,
    icon: (
      <Icon w={16} h={17}>
        <path d="M0 0h16v17H0z" fill="#efeadb" stroke="none" />
        <path d="M2 2h12v11H2z" fill="#3b93c9" stroke="none" />
        <path d="M2 8c4-3 8 1 12-2v4H2z" fill="#f0b63c" stroke="none" />
        <path d="M2 10h12v3H2z" fill="#3d7a50" stroke="none" />
      </Icon>
    ),
  },
  {
    name: "Excel",
    open: true,
    icon: (
      <Icon w={17} h={16}>
        <path d="M8 2h8.500v12H8z" fill="#fff" stroke="#217346" />
        <path d="M10 5h5M10 8h5M10 11h5M12.500 3v10" stroke="#217346" />
        <path d="M0 2l10-2v16L0 14z" fill="#217346" stroke="none" />
        <text x="5" y="11" textAnchor="middle" fontSize="8" fontWeight="700" fill="#fff" stroke="none">X</text>
      </Icon>
    ),
  },
  { name: "mMass", open: true, active: true, icon: <MassLogo size={17} /> },
  { name: "Compass", open: true, icon: <CompassLogo size={18} /> },
];

function Taskbar() {
  return (
    <nav className="relative flex h-[30px] shrink-0 items-center bg-[#05080e] text-white">
      <div className="grid h-full w-[550px] grid-cols-[repeat(15,minmax(0,1fr))]">
        {tasks.map((t) => (
          <button key={t.name} type="button" aria-label={t.name} className={`flex flex-col items-center ${t.active ? "bg-[#3a3d42]" : ""}`}>
            <span className="flex flex-1 items-center">{t.icon}</span>
            <span className={`-mt-[2px] h-[2px] w-[30px] ${t.open ? "bg-[#62b765]" : ""}`} />
          </button>
        ))}
      </div>
      <div className="ml-auto flex h-full items-center">
        <div className="flex w-[46px] items-center">
          <span className="flex h-[19px] flex-1 items-center justify-center border border-white">Nabitá</span>
          <span className="h-3 w-[2px] border-y border-r border-white" />
        </div>
        <button type="button" aria-label="People" className="flex w-[42px] justify-center pl-1">
          <Icon w={12} h={12}><circle cx="4" cy="6" r="2" /><path d="M.5 12c0-5 7-5 7 0M6 3a2 2 0 1 1 3 1.500M8 6c2-.5 3.500 1 3.500 3" /></Icon>
        </button>
        <button type="button" aria-label="Hidden icons" className="flex w-4 justify-center"><Icon w={9} h={6}><path d="M.5 5.500l4-4 4 4" strokeWidth="1.200" /></Icon></button>
        <button type="button" aria-label="Dropbox" className="flex w-[19px] justify-center">
          <Icon w={11} h={10}><path d="M3 0l2.500 1.700L3 3.400.5 1.700zM8 0l2.500 1.700L8 3.400 5.500 1.700zM3 3.400l2.500 1.700L3 6.800.5 5.100zM8 3.400l2.500 1.700L8 6.800 5.500 5.100zM5.500 6l2.500 1.700-2.500 1.700L3 7.700z" fill="#fff" stroke="none" /></Icon>
        </button>
        <button type="button" aria-label="Network" className="flex w-[19px] justify-center">
          <Icon w={11} h={11}><path d="M1 9.500A9 9 0 0 1 10 1M4 10a6 6 0 0 1 6-6M6.500 10A3.500 3.500 0 0 1 10 7" stroke="#ccc" /><circle cx="9.300" cy="9.500" r="1" fill="#fff" stroke="none" /></Icon>
        </button>
        <button type="button" aria-label="Volume" className="flex w-4 justify-center">
          <Icon w={11} h={10}><path d="M.5 3.500h2l2.500-3v9l-2.500-3h-2zM7 3.500l3 3M10 3.500l-3 3" /></Icon>
        </button>
        <button type="button" aria-label="Battery" className="flex w-[19px] justify-center">
          <Icon w={13} h={9}><path d="M3.500 2.500h8v5h-8z" /><path d="M5 3.500h5v3H5z" fill="#fff" /><path d="M0 1.500h4M1.500 0v4c0 2 0 3 2 3" /></Icon>
        </button>
        <button type="button" aria-label="Sync" className="flex w-4 justify-center">
          <Icon w={12} h={12}><circle cx="6" cy="6" r="5.500" fill="#e7a95a" stroke="none" /><path d="M6 .5a5.500 5.500 0 0 1 5 7.500C8 8 6 5 6 .5z" fill="#e8eef8" stroke="none" /><path d="M.8 7.500c3 1.500 7 1.500 10 .5A5.500 5.500 0 0 1 .8 7.500z" fill="#4a7dc4" stroke="none" /></Icon>
        </button>
        <span className="w-[31px] text-center">CES</span>
        <div className="w-[46px] text-center font-['Roboto',sans-serif] leading-[13px]">
          <div>16:35</div>
          <div>02.10.2018</div>
        </div>
        <button type="button" aria-label="Notifications" className="flex w-[37px] justify-center">
          <Icon w={18} h={18}>
            <path d="M0 2h12v9H6l-2.500 3v-3H0z" fill="#fff" stroke="none" />
            <path d="M2 4.500h8M2 6.500h8M2 8.500h5" stroke="#222" />
            <circle cx="12" cy="12" r="5.300" fill="#222" stroke="#888" />
            <text x="12" y="15" textAnchor="middle" fontSize="8" fill="#fff" stroke="none">1</text>
          </Icon>
        </button>
        <span className="h-full w-1 border-l border-l-[#444]" />
      </div>
    </nav>
  );
}

export default function App() {
  return (
    <div className="relative flex h-screen w-full flex-col overflow-hidden bg-[#f0f0f0] font-['Open_Sans',sans-serif] text-[9px] leading-3 text-[#1a1a1a]">
      <ViewerHeader />
      <ViewerMain />
      <ViewerFooter />
      <Sheet />
      <MassWindow />
      <Taskbar />
    </div>
  );
}
